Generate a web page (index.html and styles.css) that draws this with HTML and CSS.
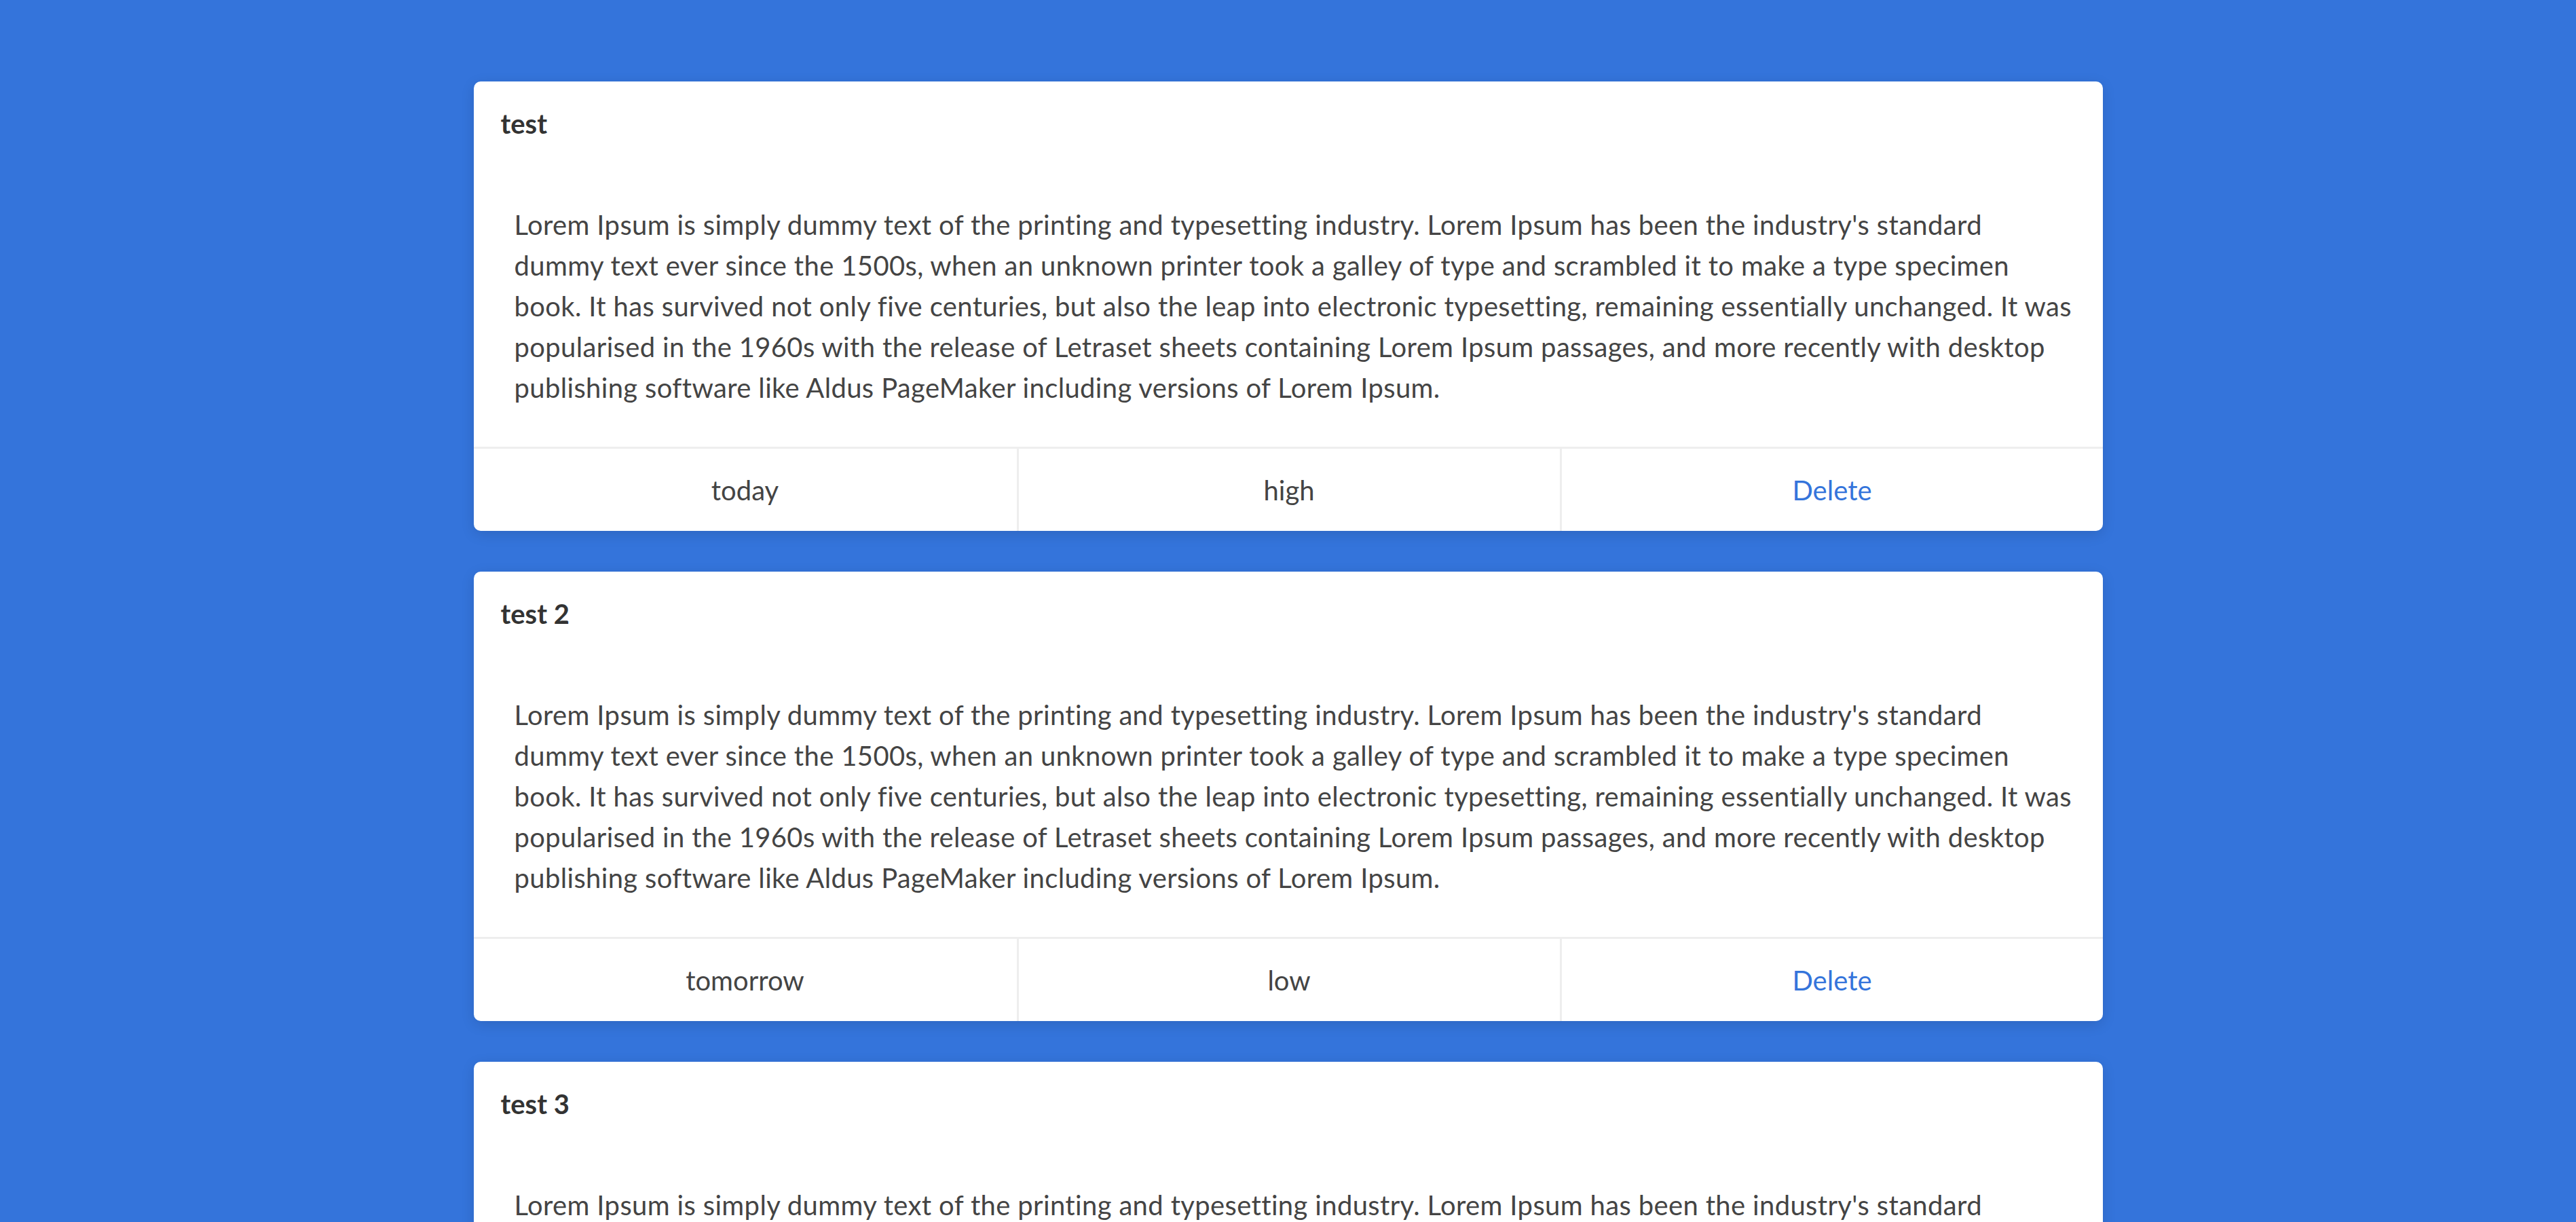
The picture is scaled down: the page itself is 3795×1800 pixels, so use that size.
FILE: index.html
```html
<!DOCTYPE html>
<html lang="en">
<head>
<meta charset="utf-8">
<title>Todos</title>
<link rel="stylesheet" href="styles.css">
</head>
<body>
<main class="list">
  <article class="card">
    <header class="card-head"><h2 class="card-title">test</h2></header>
    <div class="card-body"><p>Lorem Ipsum is simply dummy text of the printing and typesetting industry. Lorem Ipsum has been the industry's standard dummy text ever since the 1500s, when an unknown printer took a galley of type and scrambled it to make a type specimen book. It has survived not only five centuries, but also the leap into electronic typesetting, remaining essentially unchanged. It was popularised in the 1960s with the release of Letraset sheets containing Lorem Ipsum passages, and more recently with desktop publishing software like Aldus PageMaker including versions of Lorem Ipsum.</p></div>
    <footer class="card-foot"><span class="cell">today</span><span class="cell">high</span><a class="cell del">Delete</a></footer>
  </article>
  <article class="card">
    <header class="card-head"><h2 class="card-title">test 2</h2></header>
    <div class="card-body"><p>Lorem Ipsum is simply dummy text of the printing and typesetting industry. Lorem Ipsum has been the industry's standard dummy text ever since the 1500s, when an unknown printer took a galley of type and scrambled it to make a type specimen book. It has survived not only five centuries, but also the leap into electronic typesetting, remaining essentially unchanged. It was popularised in the 1960s with the release of Letraset sheets containing Lorem Ipsum passages, and more recently with desktop publishing software like Aldus PageMaker including versions of Lorem Ipsum.</p></div>
    <footer class="card-foot"><span class="cell">tomorrow</span><span class="cell">low</span><a class="cell del">Delete</a></footer>
  </article>
  <article class="card">
    <header class="card-head"><h2 class="card-title">test 3</h2></header>
    <div class="card-body"><p>Lorem Ipsum is simply dummy text of the printing and typesetting industry. Lorem Ipsum has been the industry's standard dummy text ever since the 1500s, when an unknown printer took a galley of type and scrambled it to make a type specimen book. It has survived not only five centuries, but also the leap into electronic typesetting, remaining essentially unchanged. It was popularised in the 1960s with the release of Letraset sheets containing Lorem Ipsum passages, and more recently with desktop publishing software like Aldus PageMaker including versions of Lorem Ipsum.</p></div>
    <footer class="card-foot"><span class="cell">today</span><span class="cell">high</span><a class="cell del">Delete</a></footer>
  </article>
</main>
</body>
</html>
```
FILE: styles.css
```css
html, body {
  margin: 0;
  padding: 0;
  background: #3474db;
}
body {
  font-family: Lato, "Noto Sans", sans-serif;
  color: #444;
  font-size: 40px;
}
.list {
  width: 2400px;
  margin: 0 auto;
  padding-top: 120px;
  display: flex;
  flex-direction: column;
  gap: 60px;
}
.card {
  background: #fff;
  border-radius: 10px;
  box-shadow: 0 5px 20px rgba(0, 0, 0, 0.12);
  overflow: hidden;
}
.card-head {
  padding: 38px 40px 40px;
}
.card-title {
  margin: 0;
  font-size: 40px;
  line-height: 48px;
  font-weight: 700;
  color: #333;
}
.card-body {
  padding: 55px 45px 57px 60px;
}
.card-body p {
  margin: 0;
  line-height: 60px;
  letter-spacing: 0.35px;
}
.card-foot {
  display: grid;
  grid-template-columns: 1fr 1fr 1fr;
  border-top: 3px solid #eee;
}
.cell {
  height: 121px;
  display: flex;
  align-items: center;
  justify-content: center;
  line-height: 60px;
}
.cell + .cell {
  border-left: 3px solid #eee;
}
.del {
  color: #3474db;
  cursor: pointer;
}
```
